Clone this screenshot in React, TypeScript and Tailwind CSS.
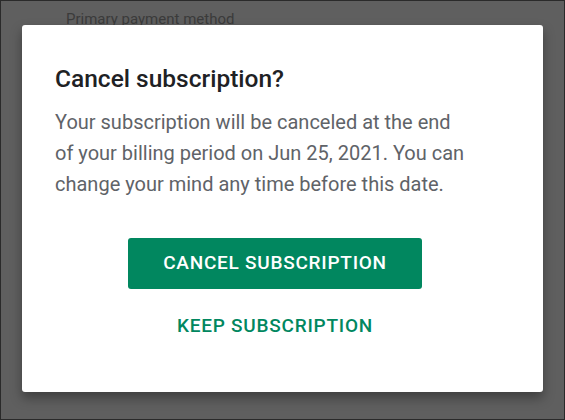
export default function App() {
  return (
    <div
      className="relative w-[565px] h-[420px] overflow-hidden bg-[#5f5f5f] border border-[#2a2a2a]"
      style={{ fontFamily: 'Roboto, "Liberation Sans", sans-serif' }}
    >
      {/* Page behind the overlay */}
      <div className="pl-[65px] pt-[8px] text-[15px] leading-[20px] text-[#3b3b3b]">
        Primary payment method
      </div>

      {/* Dialog */}
      <div className="absolute left-[21px] top-[24px] w-[521px] h-[367px] bg-white rounded-[3px] shadow-[0_6px_12px_rgba(0,0,0,0.35)] pl-[33px] pt-[38px]">
        <h2 className="text-[24.5px] leading-[32px] font-medium text-[#202124]">Cancel subscription?</h2>
        <p className="mt-[12px] w-[414px] text-[20px] leading-[31px] text-[#5f6368]">
          Your subscription will be canceled at the end of your billing period on Jun 25, 2021. You can change your
          mind any time before this date.
        </p>
        <div className="flex flex-col items-center w-[440px] mt-[38px]">
          <button className="w-[294px] h-[51px] rounded-[3px] bg-[#01875f] text-white text-[19px] font-medium tracking-[0.75px]">
            CANCEL SUBSCRIPTION
          </button>
          <button className="mt-[25px] h-[24px] text-[19px] leading-[24px] font-medium text-[#01875f] tracking-[0.75px]">
            KEEP SUBSCRIPTION
          </button>
        </div>
      </div>
    </div>
  );
}
